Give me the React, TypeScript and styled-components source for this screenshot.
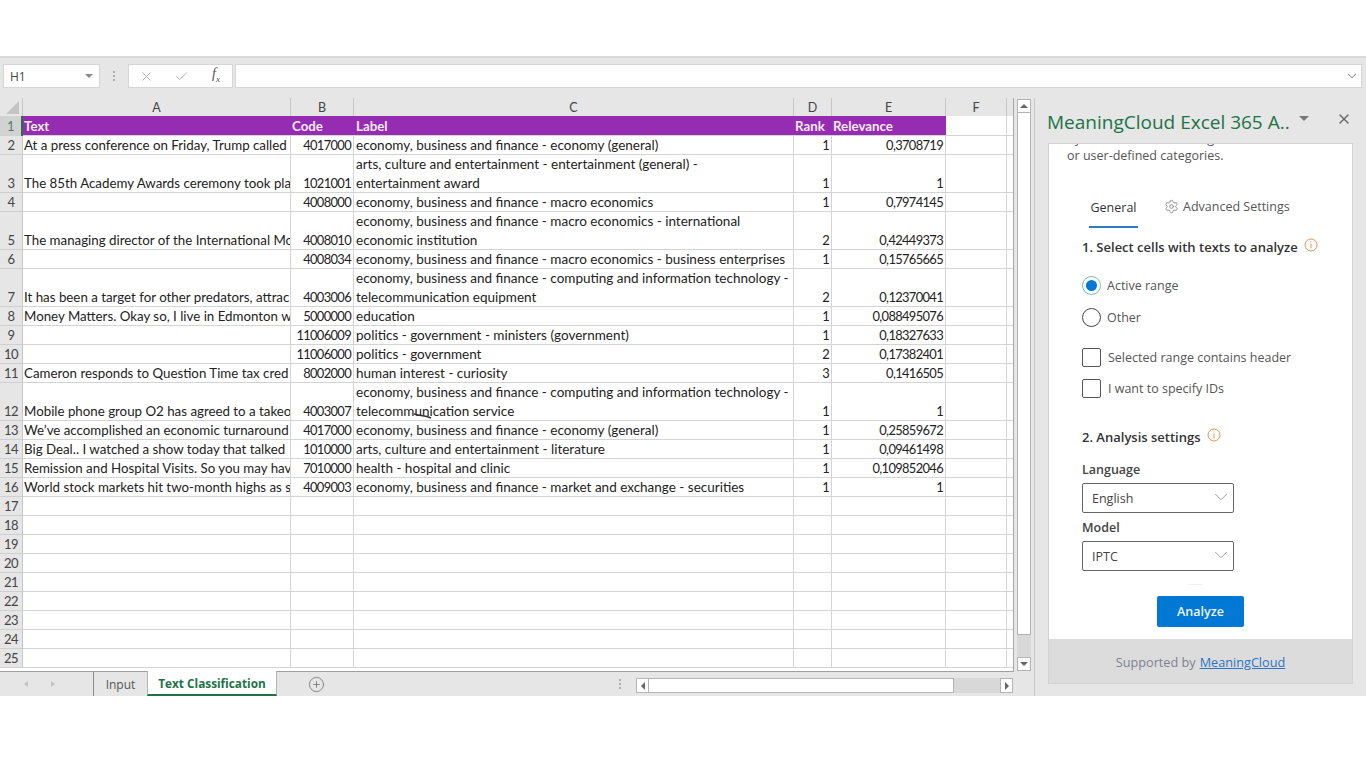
import React from "react";
import styled, { createGlobalStyle } from "styled-components";
import { ChevronDown, CirclePlus, Settings, X, Check } from "lucide-react";

type SheetRow = {
  n: number;
  tall?: boolean;
  text?: string;
  code?: string;
  label?: string[];
  rank?: string;
  relevance?: string;
};

const COLS = "23px 268px 63px 440px 38px 114px 61px 7px";

const rows: SheetRow[] = [
  { n: 2, text: "At a press conference on Friday, Trump called", code: "4017000", label: ["economy, business and finance - economy (general)"], rank: "1", relevance: "0,3708719" },
  { n: 3, tall: true, text: "The 85th Academy Awards ceremony took pla", code: "1021001", label: ["arts, culture and entertainment - entertainment (general) -", "entertainment award"], rank: "1", relevance: "1" },
  { n: 4, code: "4008000", label: ["economy, business and finance - macro economics"], rank: "1", relevance: "0,7974145" },
  { n: 5, tall: true, text: "The managing director of the International Mo", code: "4008010", label: ["economy, business and finance - macro economics - international", "economic institution"], rank: "2", relevance: "0,42449373" },
  { n: 6, code: "4008034", label: ["economy, business and finance - macro economics - business enterprises"], rank: "1", relevance: "0,15765665" },
  { n: 7, tall: true, text: "It has been a target for other predators, attrac", code: "4003006", label: ["economy, business and finance - computing and information technology -", "telecommunication equipment"], rank: "2", relevance: "0,12370041" },
  { n: 8, text: "Money Matters. Okay so, I live in Edmonton w", code: "5000000", label: ["education"], rank: "1", relevance: "0,088495076" },
  { n: 9, code: "11006009", label: ["politics - government - ministers (government)"], rank: "1", relevance: "0,18327633" },
  { n: 10, code: "11006000", label: ["politics - government"], rank: "2", relevance: "0,17382401" },
  { n: 11, text: "Cameron responds to Question Time tax cred", code: "8002000", label: ["human interest - curiosity"], rank: "3", relevance: "0,1416505" },
  { n: 12, tall: true, text: "Mobile phone group O2 has agreed to a takeo", code: "4003007", label: ["economy, business and finance - computing and information technology -", "telecommunication service"], rank: "1", relevance: "1" },
  { n: 13, text: "We’ve accomplished an economic turnaround", code: "4017000", label: ["economy, business and finance - economy (general)"], rank: "1", relevance: "0,25859672" },
  { n: 14, text: "Big Deal.. I watched a show today that talked", code: "1010000", label: ["arts, culture and entertainment - literature"], rank: "1", relevance: "0,09461498" },
  { n: 15, text: "Remission and Hospital Visits. So you may hav", code: "7010000", label: ["health - hospital and clinic"], rank: "1", relevance: "0,109852046" },
  { n: 16, text: "World stock markets hit two-month highs as s", code: "4009003", label: ["economy, business and finance - market and exchange - securities"], rank: "1", relevance: "1" },
  ...[17, 18, 19, 20, 21, 22, 23, 24, 25].map((n) => ({ n })),
];

const GlobalStyle = createGlobalStyle`
  html, body {
    margin: 0;
    padding: 0;
    background: #fff;
  }
`;

const Page = styled.div`
  width: 1366px;
  height: 768px;
  overflow: hidden;
  background: #fff;
  padding-top: 56px;
  box-sizing: border-box;
`;

const Excel = styled.div`
  height: 640px;
  background: #e6e6e6;
  border-top: 2px solid #d9d9d9;
  box-sizing: border-box;
  display: flex;
  flex-direction: column;
`;

//////////////////
// formula bar
//////////////////
const FormulaBar = styled.div`
  display: flex;
  align-items: stretch;
  height: 24px;
  margin: 6px 4px 10px 3px;
`;

const FieldBox = styled.div`
  background: #fff;
  border: 1px solid #d6d6d6;
  box-sizing: border-box;
  display: flex;
  align-items: center;
`;

const NameBox = styled(FieldBox)`
  width: 97px;
  padding: 0 6px;
  justify-content: space-between;
  font: 12px "Open Sans", sans-serif;
  color: #444;
`;

const Caret = styled.span<{ $color?: string; $size?: number }>`
  width: 0;
  height: 0;
  border-left: ${(p) => p.$size || 4}px solid transparent;
  border-right: ${(p) => p.$size || 4}px solid transparent;
  border-top: ${(p) => p.$size || 4}px solid ${(p) => p.$color || "#8a8a8a"};
`;

const Grip = styled.div`
  width: 28px;
  display: flex;
  flex-direction: column;
  align-items: center;
  justify-content: center;
  gap: 2px;
  span {
    width: 2px;
    height: 2px;
    background: #b0b0b0;
  }
`;

const FxBox = styled(FieldBox)`
  width: 105px;
  padding-left: 10px;
  gap: 20px;
  color: #b0b0b0;
`;

const FxLabel = styled.span`
  font: italic 14px "Liberation Serif", serif;
  color: #555;
  margin: -3px 0 0 3px;
  sub {
    font-size: 9px;
  }
`;

const FormulaInput = styled(FieldBox)`
  flex: 1;
  margin-left: 2px;
  justify-content: flex-end;
  padding-right: 2px;
  color: #666;
`;

//////////////////
// sheet
//////////////////
const Body = styled.div`
  flex: 1;
  display: flex;
  min-height: 0;
`;

const Workbook = styled.div`
  width: 1035px;
  border-right: 1px solid #c9c9c9;
  box-sizing: border-box;
  display: flex;
  flex-direction: column;
`;

const SheetArea = styled.div`
  height: 574px;
  display: flex;
`;

const Frame = styled.div`
  width: 1014px;
  height: 574px;
  overflow: hidden;
  background: #fff;
  border-right: 1px solid #a6a6a6;
  border-bottom: 1px solid #a0a0a0;
  box-sizing: border-box;
  font-family: Lato, "Liberation Sans", sans-serif;
  font-size: 13.3px;
  color: #222;
`;

const Row = styled.div`
  display: grid;
  grid-template-columns: ${COLS};
`;

const ColHead = styled.div`
  height: 18px;
  line-height: 20px;
  background: #e6e6e6;
  text-align: center;
  font-size: 12.5px;
  color: #444;
  border-right: 1px solid #c6c6c6;
  box-sizing: border-box;
`;

const Corner = styled.div`
  height: 18px;
  background: #e6e6e6;
  border-right: 1px solid #c6c6c6;
  display: flex;
  justify-content: flex-end;
  align-items: flex-end;
  padding: 0 3px 2px 0;
  box-sizing: border-box;
  i {
    display: block;
    width: 13px;
    height: 13px;
    background: #c4c4c4;
    clip-path: polygon(100% 0, 100% 100%, 0 100%);
  }
`;

const RowHead = styled.div<{ $tall?: boolean; $active?: boolean }>`
  height: ${(p) => (p.$tall ? 38 : 19)}px;
  background: ${(p) => (p.$active ? "#d2d2d2" : "#e6e6e6")};
  border-right: ${(p) => (p.$active ? "2px solid #217346" : "1px solid #c6c6c6")};
  box-shadow: inset 0 -1px 0 #cfcfcf;
  box-sizing: border-box;
  display: flex;
  align-items: flex-end;
  justify-content: center;
  line-height: 19px;
  font-size: 13px;
  letter-spacing: -0.6px;
  color: ${(p) => (p.$active ? "#4d7f68" : "#444")};
`;

const Cell = styled.div<{ $tall?: boolean; $right?: boolean; $label?: boolean }>`
  position: relative;
  height: ${(p) => (p.$tall ? 38 : 19)}px;
  border-right: 1px solid #d4d4d4;
  box-shadow: inset 0 -1px 0 #d4d4d4;
  box-sizing: border-box;
  padding: 0 ${(p) => (p.$right ? "2px" : "0")} 0 ${(p) => (p.$right ? "0" : p.$label ? "2px" : "1px")};
  text-align: ${(p) => (p.$right ? "right" : "left")};
  font-size: ${(p) => (p.$label ? "13.5px" : p.$right ? "12.9px" : "inherit")};
  letter-spacing: ${(p) => (p.$right ? "-0.65px" : "normal")};
  line-height: 19px;
  white-space: nowrap;
  overflow: hidden;
  display: flex;
  flex-direction: column;
  justify-content: flex-end;
`;

const HeadCell = styled.div<{ $blank?: boolean; $label?: boolean }>`
  height: 20px;
  line-height: 20px;
  padding-left: ${(p) => (p.$label ? 2 : 1)}px;
  box-sizing: border-box;
  font-weight: 700;
  color: #f6eaf9;
  background: ${(p) => (p.$blank ? "#fff" : "#952cb2")};
  box-shadow: inset 0 -1px 0 #d4d4d4;
  border-right: ${(p) => (p.$blank ? "1px solid #d4d4d4" : "none")};
`;

const TallHeadRow = styled(RowHead)`
  height: 20px;
`;

const PointerMark = styled.svg`
  position: absolute;
  left: 59px;
  bottom: 0;
`;

//////////////////
// scrollbars
//////////////////
const VScroll = styled.div`
  width: 14px;
  margin-left: 3px;
  margin-top: 1px;
  height: 572px;
  display: flex;
  flex-direction: column;
  background: #d8d8d8;
`;

const ScrollBtn = styled.div<{ $w?: number; $h?: number }>`
  width: ${(p) => p.$w || 14}px;
  height: ${(p) => p.$h || 14}px;
  flex: none;
  background: #fff;
  border: 1px solid #b4b4b4;
  box-sizing: border-box;
  display: flex;
  align-items: center;
  justify-content: center;
`;

const Arrow = styled.span<{ $dir: "up" | "down" | "left" | "right" }>`
  width: 0;
  height: 0;
  ${(p) =>
    p.$dir === "up"
      ? "border-left:4px solid transparent;border-right:4px solid transparent;border-bottom:4px solid #666;"
      : p.$dir === "down"
        ? "border-left:4px solid transparent;border-right:4px solid transparent;border-top:4px solid #666;"
        : p.$dir === "left"
          ? "border-top:4px solid transparent;border-bottom:4px solid transparent;border-right:4px solid #666;"
          : "border-top:4px solid transparent;border-bottom:4px solid transparent;border-left:4px solid #666;"}
`;

const VThumb = styled.div`
  height: 522px;
  flex: none;
  background: #fff;
  border: 1px solid #b4b4b4;
  border-top: none;
  box-sizing: border-box;
`;

const Spacer = styled.div`
  flex: 1;
`;

//////////////////
// tabs
//////////////////
const TabBar = styled.div`
  height: 24px;
  display: flex;
  align-items: stretch;
  font-family: "Open Sans", sans-serif;
`;

const TabNav = styled.div`
  width: 93px;
  padding-left: 24px;
  box-sizing: border-box;
  display: flex;
  align-items: center;
  gap: 23px;
  span {
    width: 0;
    height: 0;
    border-top: 3px solid transparent;
    border-bottom: 3px solid transparent;
  }
  span:first-child {
    border-right: 4px solid #c4c4c4;
  }
  span:last-child {
    border-left: 4px solid #c4c4c4;
  }
`;

const Tab = styled.div<{ $active?: boolean }>`
  width: ${(p) => (p.$active ? 130 : 54)}px;
  padding-top: ${(p) => (p.$active ? 1 : 0)}px;
  margin-top: ${(p) => (p.$active ? "-1px" : "0")};
  display: flex;
  align-items: center;
  justify-content: center;
  box-sizing: border-box;
  font-size: ${(p) => (p.$active ? 11.8 : 12)}px;
  font-weight: ${(p) => (p.$active ? 700 : 400)};
  color: ${(p) => (p.$active ? "#217346" : "#555")};
  background: ${(p) => (p.$active ? "#fff" : "transparent")};
  border-left: 1px solid ${(p) => (p.$active ? "#b5b5b5" : "#8c8c8c")};
  border-right: ${(p) => (p.$active ? "1px solid #b5b5b5" : "none")};
  border-bottom: ${(p) => (p.$active ? "2px solid #217346" : "none")};
`;

const AddSheet = styled.div`
  width: 78px;
  display: flex;
  align-items: center;
  justify-content: center;
  color: #777;
`;

const TabGrip = styled(Grip)`
  margin-left: 250px;
  width: 30px;
`;

const HScroll = styled.div`
  width: 377px;
  height: 15px;
  margin: 6px 0 0 1px;
  display: flex;
  background: #d8d8d8;
`;

const HThumb = styled.div`
  width: 305px;
  background: #fff;
  border: 1px solid #b4b4b4;
  border-left: none;
  box-sizing: border-box;
`;

//////////////////
// task pane
//////////////////
const Pane = styled.div`
  flex: 1;
  padding: 0 13px 12px 13px;
  display: flex;
  flex-direction: column;
  font-family: "Open Sans", sans-serif;
`;

const PaneHeader = styled.div`
  height: 45px;
  display: flex;
  align-items: center;
  color: #217346;
  font-size: 19px;
  margin-left: -1px;
  padding-top: 2px;
  box-sizing: border-box;
`;

const PaneCaret = styled(Caret)`
  margin: -6px 0 0 9px;
`;

const PaneClose = styled.div`
  margin: -6px 1px 0 auto;
  color: #666;
  display: flex;
`;

const Card = styled.div`
  flex: 1;
  min-height: 0;
  background: #fff;
  border: 1px solid #d2d2d2;
  box-sizing: border-box;
  display: flex;
  flex-direction: column;
`;

const Scroller = styled.div`
  flex: 1;
  min-height: 0;
  overflow: hidden;
  padding: 0 0 0 33px;
  color: #444;
  font-size: 12.5px;
`;

const Intro = styled.div`
  margin: -14px 0 0 -15px;
  line-height: 17px;
  color: #555;
  font-size: 12.5px;
  white-space: nowrap;
`;

const TabsRow = styled.div`
  display: flex;
  margin: 34px 0 0 7px;
  height: 30px;
`;

const PaneTab = styled.div<{ $active?: boolean }>`
  width: ${(p) => (p.$active ? "49px" : "auto")};
  margin-left: ${(p) => (p.$active ? 0 : 27)}px;
  height: 30px;
  box-sizing: border-box;
  line-height: ${(p) => (p.$active ? 20 : 18)}px;
  text-align: center;
  display: flex;
  justify-content: center;
  gap: 4px;
  color: ${(p) => (p.$active ? "#333" : "#555")};
  border-bottom: 2px solid ${(p) => (p.$active ? "#2b7cc4" : "transparent")};
`;

const GearWrap = styled.span`
  display: flex;
  margin: 1px 0 0 -1px;
  color: #666;
`;

const SectionTitle = styled.div<{ $top: number }>`
  margin-top: ${(p) => p.$top}px;
  line-height: 18px;
  font-weight: 600;
  color: #333;
  display: flex;
  align-items: center;
  gap: 6px;
  font-size: 13px;
  white-space: nowrap;
`;

const InfoIcon = styled.svg`
  margin-top: -4px;
  flex: none;
`;

const Choice = styled.div<{ $top: number }>`
  margin-top: ${(p) => p.$top}px;
  height: 20px;
  display: flex;
  align-items: center;
  color: #555;
`;

const Radio = styled.span<{ $on?: boolean }>`
  width: 19px;
  height: 19px;
  border-radius: 50%;
  box-sizing: border-box;
  flex: none;
  margin-right: 6px;
  border: ${(p) => (p.$on ? "1.5px solid #7fb4e2" : "1.5px solid #444")};
  display: flex;
  align-items: center;
  justify-content: center;
  &::after {
    content: "";
    display: ${(p) => (p.$on ? "block" : "none")};
    width: 11px;
    height: 11px;
    border-radius: 50%;
    background: #0078d4;
  }
`;

const Checkbox = styled.span`
  width: 19px;
  height: 19px;
  border: 1.5px solid #555;
  border-radius: 2px;
  box-sizing: border-box;
  flex: none;
  margin-right: 7px;
`;

const FieldLabel = styled.div<{ $top: number }>`
  margin-top: ${(p) => p.$top}px;
  line-height: 18px;
  font-weight: 600;
  color: #444;
  font-size: 12.5px;
`;

const Select = styled.div`
  width: 152px;
  height: 30px;
  margin-top: 4px;
  border: 1px solid #666;
  border-radius: 2px;
  box-sizing: border-box;
  padding: 0 1px 0 9px;
  display: flex;
  align-items: center;
  justify-content: space-between;
  color: #444;
  svg {
    color: #888;
    margin-top: -2px;
  }
`;

const Nub = styled.div`
  width: 14px;
  height: 1px;
  margin: 13px 0 0 106px;
  background: #f0f0f0;
`;

const Analyze = styled.div`
  width: 87px;
  height: 31px;
  margin: 11px 0 0 75px;
  background: #0078d4;
  border-radius: 2px;
  color: #eef6fc;
  font-weight: 600;
  display: flex;
  align-items: center;
  justify-content: center;
`;

const CardFooter = styled.div`
  height: 44px;
  flex: none;
  padding-top: 1px;
  box-sizing: border-box;
  background: #dcdcdc;
  display: flex;
  align-items: center;
  justify-content: center;
  gap: 4px;
  font-size: 12.7px;
  color: #7c8291;
  a {
    color: #2a75c5;
    text-decoration: underline;
  }
`;

const Info = () => (
  <InfoIcon width="14" height="14" viewBox="0 0 14 14" fill="none">
    <circle cx="7" cy="7" r="6" stroke="#e0965a" strokeWidth="1" />
    <path d="M7 3.4v1M7 5.6v4.8" stroke="#e0965a" strokeWidth="1" />
  </InfoIcon>
);

const App = () => {
  return (
    <Page>
      <GlobalStyle />
      <Excel>
        <FormulaBar>
          <NameBox>
            H1
            <Caret />
          </NameBox>
          <Grip>
            <span />
            <span />
            <span />
          </Grip>
          <FxBox>
            <X size={15} strokeWidth={1.6} />
            <Check size={15} strokeWidth={1.6} />
            <FxLabel>
              f<sub>x</sub>
            </FxLabel>
          </FxBox>
          <FormulaInput>
            <ChevronDown size={14} strokeWidth={1.6} />
          </FormulaInput>
        </FormulaBar>

        <Body>
          <Workbook>
            <SheetArea>
              <Frame>
                <Row>
                  <Corner>
                    <i />
                  </Corner>
                  {["A", "B", "C", "D", "E", "F", ""].map((c) => (
                    <ColHead key={c}>{c}</ColHead>
                  ))}
                </Row>
                <Row>
                  <TallHeadRow $active>1</TallHeadRow>
                  <HeadCell>Text</HeadCell>
                  <HeadCell>Code</HeadCell>
                  <HeadCell $label>Label</HeadCell>
                  <HeadCell>Rank</HeadCell>
                  <HeadCell>Relevance</HeadCell>
                  <HeadCell $blank />
                  <HeadCell $blank />
                </Row>
                {rows.map((r) => (
                  <Row key={r.n}>
                    <RowHead $tall={r.tall}>{r.n}</RowHead>
                    <Cell $tall={r.tall}>{r.text}</Cell>
                    <Cell $tall={r.tall} $right>
                      {r.code}
                    </Cell>
                    <Cell $tall={r.tall} $label>
                      {r.label?.map((l) => <div key={l}>{l}</div>)}
                      {r.n === 12 && (
                        <PointerMark width="20" height="10" viewBox="0 0 20 10" fill="none">
                          <path d="M1 3c5 2 11 1 17 4" stroke="#333" strokeWidth="1.4" />
                        </PointerMark>
                      )}
                    </Cell>
                    <Cell $tall={r.tall} $right>
                      <div>{r.rank}</div>
                    </Cell>
                    <Cell $tall={r.tall} $right>
                      <div>{r.relevance}</div>
                    </Cell>
                    <Cell $tall={r.tall} />
                    <Cell $tall={r.tall} />
                  </Row>
                ))}
              </Frame>
              <VScroll>
                <ScrollBtn>
                  <Arrow $dir="up" />
                </ScrollBtn>
                <VThumb />
                <Spacer />
                <ScrollBtn>
                  <Arrow $dir="down" />
                </ScrollBtn>
              </VScroll>
            </SheetArea>
            <TabBar>
              <TabNav>
                <span />
                <span />
              </TabNav>
              <Tab>Input</Tab>
              <Tab $active>Text Classification</Tab>
              <AddSheet>
                <CirclePlus size={17} strokeWidth={1.2} />
              </AddSheet>
              <TabGrip>
                <span />
                <span />
                <span />
              </TabGrip>
              <HScroll>
                <ScrollBtn $w={13} $h={15}>
                  <Arrow $dir="left" />
                </ScrollBtn>
                <HThumb />
                <Spacer />
                <ScrollBtn $w={13} $h={15}>
                  <Arrow $dir="right" />
                </ScrollBtn>
              </HScroll>
            </TabBar>
          </Workbook>

          <Pane>
            <PaneHeader>
              MeaningCloud Excel 365 A..
              <PaneCaret $color="#777" $size={5} />
              <PaneClose>
                <X size={16} strokeWidth={2.2} />
              </PaneClose>
            </PaneHeader>
            <Card>
              <Scroller>
                <Intro>
                  by means of a standard generic
                  <br />
                  or user-defined categories.
                </Intro>
                <TabsRow>
                  <PaneTab $active>General</PaneTab>
                  <PaneTab>
                    <GearWrap>
                      <Settings size={15} strokeWidth={1.1} />
                    </GearWrap>
                    Advanced Settings
                  </PaneTab>
                </TabsRow>
                <SectionTitle $top={10}>
                  1. Select cells with texts to analyze
                  <Info />
                </SectionTitle>
                <Choice $top={19}>
                  <Radio $on />
                  Active range
                </Choice>
                <Choice $top={12}>
                  <Radio />
                  Other
                </Choice>
                <Choice $top={20}>
                  <Checkbox />
                  Selected range contains header
                </Choice>
                <Choice $top={11}>
                  <Checkbox />I want to specify IDs
                </Choice>
                <SectionTitle $top={30}>
                  2. Analysis settings
                  <Info />
                </SectionTitle>
                <FieldLabel $top={15}>Language</FieldLabel>
                <Select>
                  English
                  <ChevronDown size={22} strokeWidth={0.9} />
                </Select>
                <FieldLabel $top={6}>Model</FieldLabel>
                <Select>
                  IPTC
                  <ChevronDown size={22} strokeWidth={0.9} />
                </Select>
                <Nub />
                <Analyze>Analyze</Analyze>
              </Scroller>
              <CardFooter>
                Supported by <a>MeaningCloud</a>
              </CardFooter>
            </Card>
          </Pane>
        </Body>
      </Excel>
    </Page>
  );
};

export default App;
